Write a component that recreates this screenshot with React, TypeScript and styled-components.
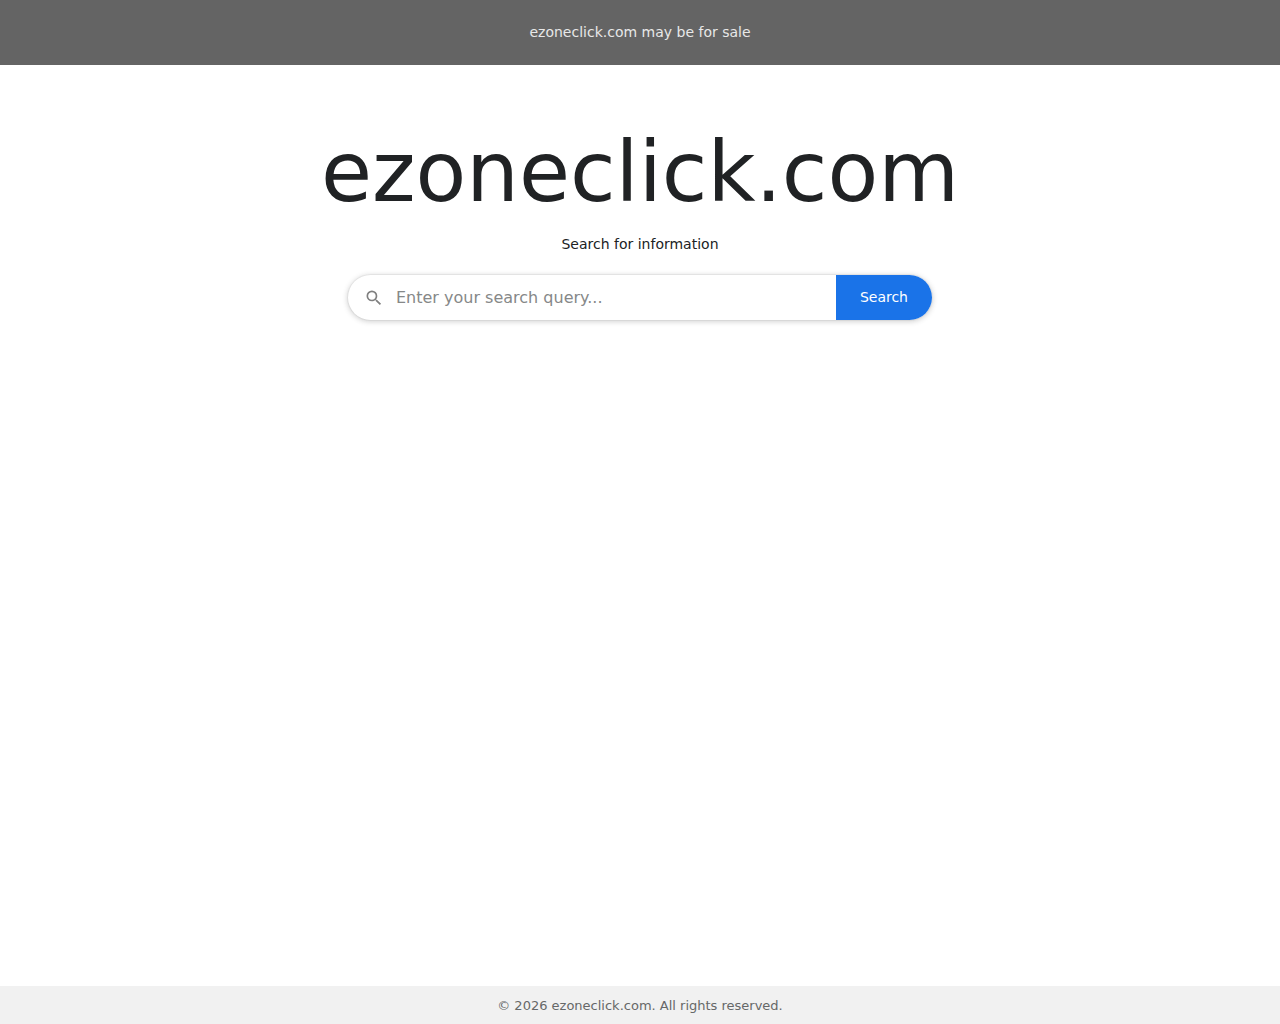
import React, { useState } from "react";
import styled, { createGlobalStyle } from "styled-components";

const GlobalStyle = createGlobalStyle`
  * { box-sizing: border-box; }
  body {
    margin: 0;
    background: #fff;
    color: #202224;
    font-family: "DejaVu Sans", sans-serif;
    font-size: 14px;
  }
`;

const Page = styled.div`
  display: flex;
  flex-direction: column;
  min-height: 100vh;
`;

const SaleBanner = styled.header`
  padding: 24px;
  background: #646464;
  text-align: center;
  line-height: 17px;
`;

const SaleLink = styled.a`
  color: #e8e8e8;
  text-decoration: none;
`;

const Main = styled.main`
  flex: 1;
  display: flex;
  flex-direction: column;
  align-items: center;
  padding: 56px 24px 24px;
`;

const DomainName = styled.h1`
  margin: 0;
  font-size: 83px;
  font-weight: 400;
  line-height: 104px;
`;

const Tagline = styled.p`
  margin: 11px 0 22px;
  line-height: 17px;
`;

const SearchForm = styled.form`
  display: flex;
  width: 100%;
  max-width: 584px;
  height: 45px;
  border-radius: 24px;
  background: #fff;
  overflow: hidden;
  box-shadow: 0 1px 5px 1px rgba(64, 64, 64, 0.22), 0 0 0 1px rgba(64, 64, 64, 0.05);
`;

const SearchField = styled.label`
  flex: 1;
  display: flex;
  align-items: center;
  gap: 12px;
  padding-left: 16px;
`;

const SearchIcon = styled.svg`
  flex: none;
  width: 20px;
  height: 20px;
  fill: #808080;
`;

const SearchInput = styled.input`
  flex: 1;
  min-width: 0;
  padding: 0;
  border: 0;
  outline: 0;
  background: transparent;
  color: #202224;
  font: inherit;
  font-size: 16px;

  &::placeholder {
    color: #868888;
    opacity: 1;
  }
`;

const SearchButton = styled.button`
  padding: 0 24px 1px;
  border: 0;
  background: #1a73e8;
  color: #fff;
  font: inherit;
  cursor: pointer;
`;

const Footer = styled.footer`
  padding: 12px 24px 11px;
  background: #f1f1f1;
  color: #666868;
  font-size: 13px;
  line-height: 15px;
  text-align: center;
`;

export default function App() {
  const [query, setQuery] = useState("");

  return (
    <Page>
      <GlobalStyle />
      <SaleBanner>
        <SaleLink href="#sale">ezoneclick.com may be for sale</SaleLink>
      </SaleBanner>
      <Main>
        <DomainName>ezoneclick.com</DomainName>
        <Tagline>Search for information</Tagline>
        <SearchForm role="search" onSubmit={(event) => event.preventDefault()}>
          <SearchField htmlFor="query">
            <SearchIcon viewBox="0 0 24 24" aria-hidden="true">
              <path d="M15.5 14h-.79l-.28-.27A6.471 6.471 0 0 0 16 9.5 6.5 6.5 0 1 0 9.5 16c1.61 0 3.09-.59 4.23-1.57l.27.28v.79l5 4.99L20.49 19l-4.99-5zm-6 0C7.01 14 5 11.99 5 9.5S7.01 5 9.5 5 14 7.01 14 9.5 11.99 14 9.5 14z" />
            </SearchIcon>
            <SearchInput
              id="query"
              type="text"
              aria-label="Search query"
              placeholder="Enter your search query..."
              value={query}
              onChange={(event) => setQuery(event.target.value)}
            />
          </SearchField>
          <SearchButton type="submit">Search</SearchButton>
        </SearchForm>
      </Main>
      <Footer>© 2026 ezoneclick.com. All rights reserved.</Footer>
    </Page>
  );
}
